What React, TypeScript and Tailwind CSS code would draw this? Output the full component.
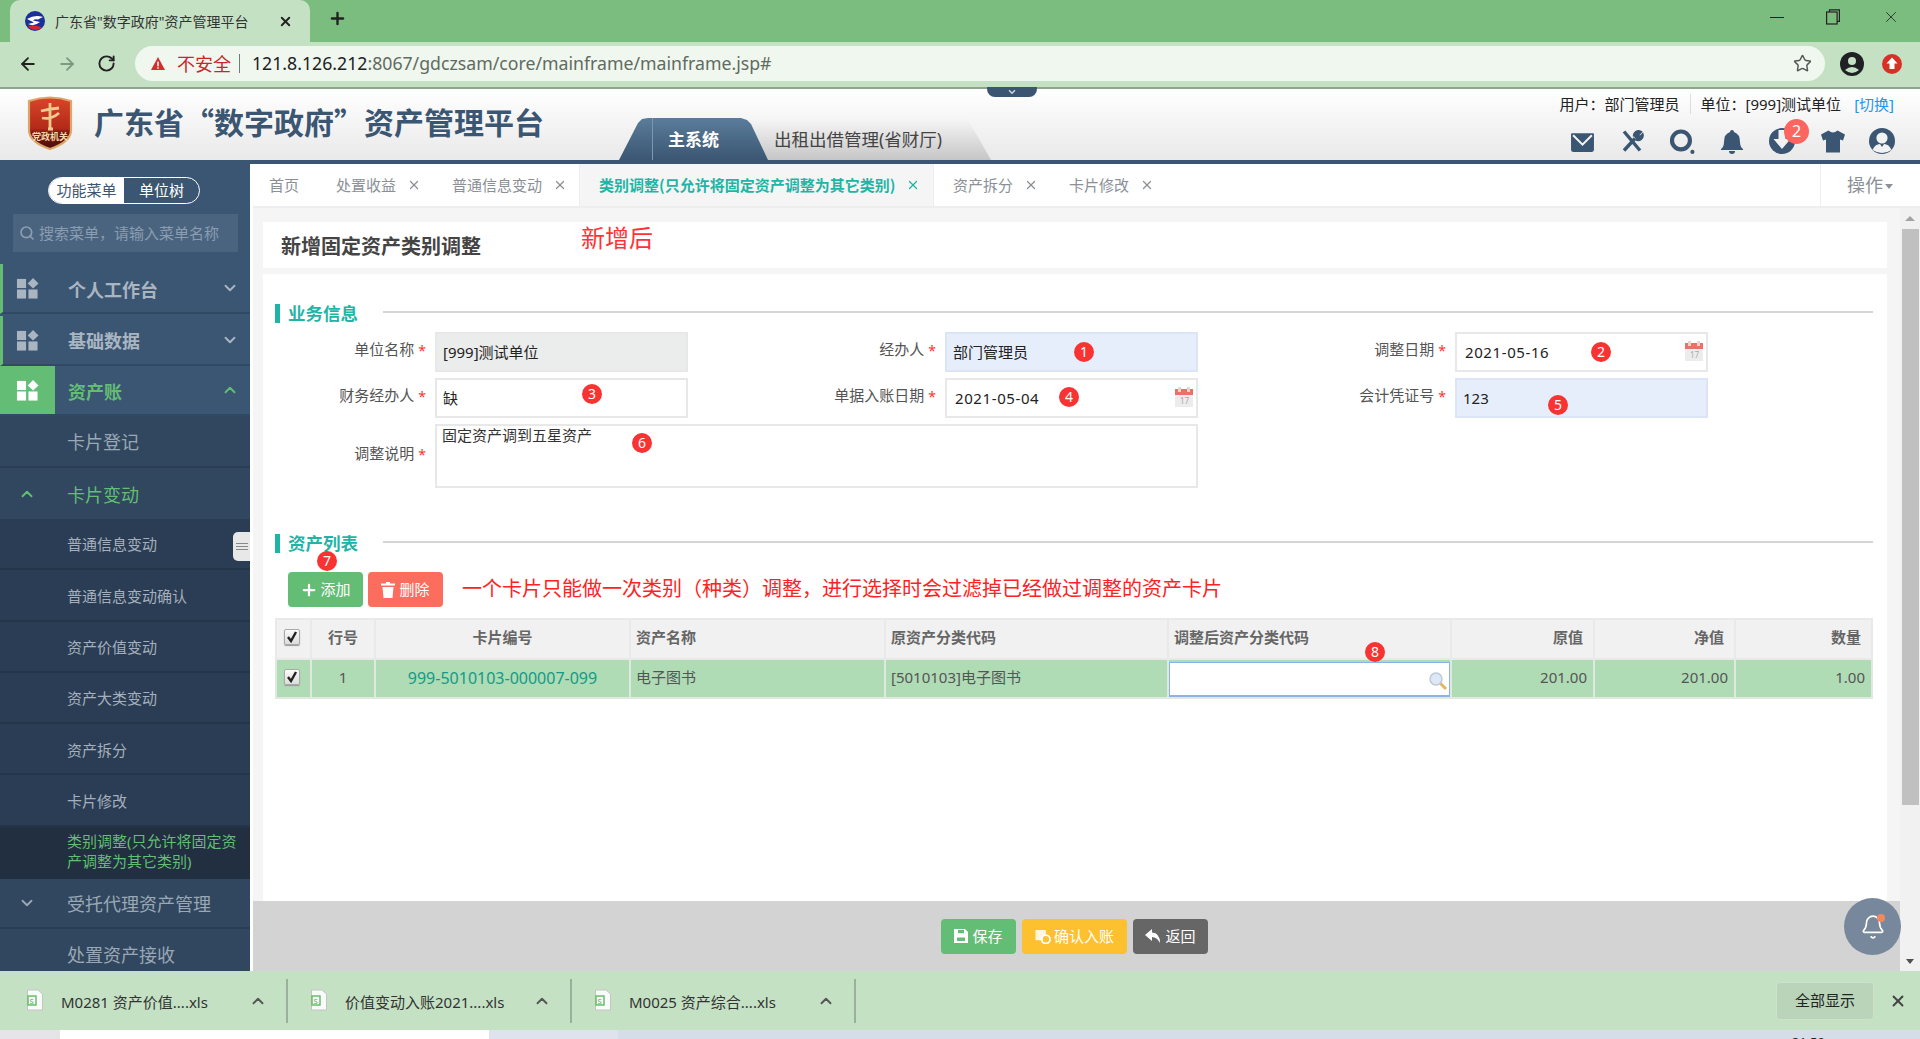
import React from "react";
import { ArrowLeft, ArrowRight, RotateCw, Star, X, Plus, ChevronUp, ChevronDown, Search, Bell } from "lucide-react";

function Badge({ n, className }: { n: number; className: string }) {
  return (
    <span className={"absolute w-[20px] h-[20px] rounded-full bg-[#f93232] text-white text-[14px] leading-[20px] text-center font-['Noto_Sans',sans-serif] " + className}>
      {n}
    </span>
  );
}

function Tile({ className }: { className: string }) {
  return (
    <svg viewBox="0 0 24 24" className={className} fill="currentColor">
      <rect x="1" y="2" width="9.5" height="9.5" />
      <rect x="1" y="13" width="9.5" height="9.5" />
      <rect x="13" y="13" width="9.5" height="9.5" />
      <path d="M17.8 1 L23.5 6.7 L17.8 12 L12.2 6.7 Z" />
    </svg>
  );
}

function BrowserBar() {
  return (
    <>
      <div className="h-[42px] bg-[#7bbd7e] flex items-end pl-[10px] relative shrink-0">
        <div className="w-[300px] h-[42px] bg-[#c4e1c4] rounded-t-[10px] flex items-center pl-[15px] text-[14px] text-[#333]">
          <svg viewBox="0 0 20 20" className="w-[20px] h-[20px] shrink-0">
            <circle cx="10" cy="10" r="10" fill="#1a2f9a" />
            <path d="M3 15 A9.5 9.5 0 0 0 17 16.5 Q11 13.5 3 15Z" fill="#d8242a" />
            <path d="M2 8 Q10 3 18 6 L13 8.5 Q10 7.5 8 9.5 L15 11 Q9 16 3 13 L9 11.5Z" fill="#fff" />
          </svg>
          <span className="ml-[10px] w-[216px] whitespace-nowrap">广东省"数字政府"资产管理平台</span>
          <X className="w-[15px] h-[15px] ml-[7px] text-[#222]" strokeWidth={3} />
        </div>
        <Plus className="w-[19px] h-[19px] ml-[18px] mb-[14px] text-[#222]" strokeWidth={3} />
        <div className="ml-auto flex items-center h-[42px] mr-[20px] mb-[4px] gap-[42px] text-[#222]">
          <span className="w-[14px] h-px bg-[#222]" />
          <svg viewBox="0 0 14 16" className="w-[14px] h-[16px]" fill="none" stroke="#222" strokeWidth="1.2">
            <rect x="0.6" y="3" width="10.5" height="12" />
            <path d="M3.5 3V0.8H13.4V12.4H11" />
          </svg>
          <X className="w-[18px] h-[18px]" strokeWidth={1.1} />
        </div>
      </div>
      <div className="h-[47px] bg-[#c4e1c4] border-b-2 border-[#8fa38f] flex items-center shrink-0 pb-[2px]">
        <ArrowLeft className="w-[20px] h-[20px] ml-[18px] text-[#222]" strokeWidth={2.2} />
        <ArrowRight className="w-[20px] h-[20px] ml-[19px] text-[#7f9880]" strokeWidth={2.2} />
        <RotateCw className="w-[19px] h-[19px] ml-[20px] text-[#222]" strokeWidth={2.4} />
        <div className="ml-[19px] w-[1690px] h-[35px] rounded-full bg-[#eff7ef] flex items-center pl-[15px] text-[18px] leading-none">
          <svg viewBox="0 0 16 16" className="w-[16px] h-[15px]">
            <path d="M8 1 L15.5 15 H0.5 Z" fill="#d32f2f" />
            <rect x="7.2" y="6" width="1.6" height="5" fill="#fff" />
            <rect x="7.2" y="12" width="1.6" height="1.6" fill="#fff" />
          </svg>
          <span className="ml-[11px] text-[#c62828]">不安全</span>
          <span className="ml-[8px] w-px h-[19px] bg-[#777]" />
          <span className="ml-[12px] text-[17.7px] text-[#222] whitespace-nowrap">121.8.126.212<span className="text-[#5f6b60]">:8067/gdczsam/core/mainframe/mainframe.jsp#</span></span>
          <Star className="ml-auto mr-[13px] w-[19px] h-[19px] text-[#555]" strokeWidth={1.8} />
        </div>
        <svg viewBox="0 0 24 24" className="ml-[15px] w-[24px] h-[24px]">
          <circle cx="12" cy="12" r="12" fill="#202124" />
          <circle cx="12" cy="9" r="4" fill="#c4e1c4" />
          <path d="M5 18 Q12 12 19 18 Q12 24 5 18Z" fill="#c4e1c4" />
        </svg>
        <svg viewBox="0 0 20 20" className="ml-[18px] w-[20px] h-[20px]">
          <circle cx="10" cy="10" r="10" fill="#d93025" />
          <path d="M10 3.5 L15.5 9.5 H12.5 V15 H7.5 V9.5 H4.5 Z" fill="#fff" />
        </svg>
      </div>
    </>
  );
}

function HeaderIcons() {
  return (
    <div className="flex items-center mr-[25px] relative text-[#3b5672]">
      <svg viewBox="0 0 24 24" className="w-[25px] h-[25px]" fill="currentColor">
        <path d="M2 4 H22 Q23 4 23 5 V20 Q23 22 21 22 H3 Q1 22 1 20 V5 Q1 4 2 4Z" />
        <path d="M3 6 L12 15 L21 6" fill="none" stroke="#f4f4f4" strokeWidth="2" />
      </svg>
      <svg viewBox="0 0 24 24" className="w-[24px] h-[25px] ml-[25px]" fill="none" stroke="currentColor" strokeWidth="3.4">
        <path d="M4 2 L20 21" />
        <path d="M4 21 L15 9" />
        <path d="M14 7 A4.5 4.5 0 0 1 21 2.5 L18 5.5 L20 7.6 L22.6 5 A4.5 4.5 0 0 1 16 10" strokeWidth="2.2" fill="currentColor" />
      </svg>
      <svg viewBox="0 0 24 24" className="w-[26px] h-[25px] ml-[25px]" fill="none" stroke="currentColor">
        <circle cx="11" cy="11" r="8.6" strokeWidth="4" />
        <circle cx="22" cy="22" r="2" fill="currentColor" stroke="none" />
      </svg>
      <svg viewBox="0 0 24 24" className="w-[24px] h-[26px] ml-[25px]" fill="currentColor">
        <path d="M12 1 Q14 1 14 3 Q20 5 20 13 Q20 18 23 20 V21 H1 V20 Q4 18 4 13 Q4 5 10 3 Q10 1 12 1Z" />
        <path d="M9 22 H15 Q15 25 12 25 Q9 25 9 22Z" />
      </svg>
      <svg viewBox="0 0 26 26" className="w-[26px] h-[26px] ml-[25px]" fill="currentColor">
        <circle cx="13" cy="13" r="13" />
        <path d="M9.5 2 H16.5 V11 H21.5 L13 21 L4.5 11 H9.5Z" fill="#f2f2f2" />
      </svg>
      <svg viewBox="0 0 26 24" className="w-[26px] h-[25px] ml-[25px]" fill="currentColor">
        <path d="M8.5 1 Q13 5 17.5 1 L25 5 L23 11 L20 10 V23 H6 V10 L3 11 L1 5Z" />
      </svg>
      <svg viewBox="0 0 26 26" className="w-[26px] h-[26px] ml-[23px]" fill="currentColor">
        <circle cx="13" cy="13" r="13" />
        <circle cx="13" cy="10" r="5.6" fill="#f2f2f2" />
        <path d="M3.5 22 Q6 16 11 16 L13 19 L15 16 Q20 16 22.5 22 Q13 28 3.5 22Z" fill="#f2f2f2" />
      </svg>
      <span className="absolute left-[214px] -top-[9px] w-[25px] h-[25px] rounded-full bg-[#fd6560] text-white text-[16px] leading-[25px] text-center font-['Noto_Sans',sans-serif]">2</span>
    </div>
  );
}

function AppHeader() {
  return (
    <div className="h-[75px] border-b-4 border-[#3b5672] bg-gradient-to-b from-white to-[#e9e9e9] flex shrink-0 relative">
      <svg viewBox="0 0 46 54" className="w-[46px] h-[54px] ml-[27px] mt-[7px] shrink-0">
        <defs>
          <linearGradient id="sh" x1="0" y1="0" x2="0" y2="1">
            <stop offset="0" stopColor="#d8452a" />
            <stop offset="0.6" stopColor="#b32a18" />
            <stop offset="0.68" stopColor="#7a1a10" />
            <stop offset="1" stopColor="#4a0d08" />
          </linearGradient>
        </defs>
        <path d="M2 5 Q23 -2 44 5 V34 Q44 46 23 53 Q2 46 2 34Z" fill="url(#sh)" stroke="#dca66a" strokeWidth="2.2" />
        <path d="M23 7 V33 M21 33 H26 M14 15 Q22 13 32 12 M15 22 Q24 24 32 17" stroke="#f3c98f" strokeWidth="2.8" fill="none" />
        <text x="23" y="44" textAnchor="middle" fontSize="9" fontWeight="700" fill="#f5d7a8" fontFamily="'Noto Sans CJK SC',sans-serif">党政机关</text>
      </svg>
      <h1 className="ml-[21px] mt-[14px] h-[36px] text-[30px] leading-[36px] font-bold text-[#3b5672] whitespace-nowrap font-['Noto_Sans_CJK_SC',sans-serif]">广东省“数字政府”资产管理平台</h1>
      <div className="ml-[75px] self-end flex relative h-[42px] w-[373px]">
        <div className="relative z-10 w-[149px] h-[42px] bg-gradient-to-b from-[#5b7d9b] to-[#3b5672] [clip-path:polygon(0_100%,19px_5px,23px_1px,29px_0,122px_0,128px_2px,132px_6px,100%_100%)] flex items-center justify-center text-[17px] font-bold text-white font-['Noto_Sans_CJK_SC',sans-serif]">
          <span className="absolute left-[33px] top-0 h-full w-px bg-[#7d97ae]" />
          主系统
        </div>
        <div className="-ml-[24px] w-[247px] h-[41px] self-end bg-gradient-to-b from-[#f6f6f6] to-[#c6c6c6] [clip-path:polygon(0_0,222px_0,226px_4px,100%_100%,21px_100%)] pl-[30px] flex items-center text-[17.5px] text-[#444] whitespace-nowrap">
          出租出借管理(省财厅)
        </div>
        <div className="absolute left-[368px] -top-[31px] w-[50px] h-[10px] bg-[#3b5672] rounded-b-[8px] flex items-center justify-center">
          <ChevronDown className="w-[10px] h-[10px] text-[#c8d2dc]" strokeWidth={4} />
        </div>
      </div>
      <div className="ml-auto flex flex-col items-end pt-[5px]">
        <div className="flex items-center text-[15px] leading-[20px] text-[#222] mr-[26px] whitespace-nowrap">
          <span>用户：部门管理员</span>
          <span className="mx-[10px] w-px h-[20px] bg-[#ddd]" />
          <span>单位：[999]测试单位</span>
          <span className="ml-[13px] text-[#2196f3]">[切换]</span>
        </div>
        <div className="mt-[14px]">
          <HeaderIcons />
        </div>
      </div>
    </div>
  );
}

function Sidebar() {
  const sub = ["普通信息变动", "普通信息变动确认", "资产价值变动", "资产大类变动", "资产拆分", "卡片修改"];
  return (
    <aside className="w-[250px] shrink-0 bg-[#3b5672] overflow-hidden relative">
      <div className="h-[50px] pl-[48px] pt-[13px]">
        <div className="w-[152px] h-[27px] rounded-full border border-white flex text-[15px] overflow-hidden">
          <span className="w-[75px] bg-white text-[#3b5672] text-center leading-[25px]">功能菜单</span>
          <span className="flex-1 text-white text-center leading-[25px]">单位树</span>
        </div>
      </div>
      <div className="ml-[13px] w-[225px] h-[38px] bg-[#4a6480] flex items-center pl-[6px] text-[15px] text-[#8b9db0]">
        <Search className="w-[16px] h-[16px] mr-[4px]" strokeWidth={2.5} />
        搜索菜单，请输入菜单名称
      </div>
      <div className="mt-[12px] border-l-[3px] border-[#63bd75] h-[50px] flex items-center border-b-2 border-b-[#304a63] text-[#a9b5c1]">
        <Tile className="ml-[13px] w-[23px] h-[23px] text-[#a9b5c1]" />
        <span className="ml-[29px] mt-[2px] text-[18px] font-bold font-['Noto_Sans_CJK_SC',sans-serif]">个人工作台</span>
        <ChevronDown className="ml-auto mr-[11px] w-[18px] h-[18px]" strokeWidth={2.5} />
      </div>
      <div className="mt-[2px] border-l-[3px] border-[#63bd75] h-[50px] flex items-center border-b-2 border-b-[#304a63] text-[#a9b5c1]">
        <Tile className="ml-[13px] w-[23px] h-[23px] text-[#a9b5c1]" />
        <span className="ml-[29px] text-[18px] font-bold font-['Noto_Sans_CJK_SC',sans-serif]">基础数据</span>
        <ChevronDown className="ml-auto mr-[11px] w-[18px] h-[18px]" strokeWidth={2.5} />
      </div>
      <div className="h-[50px] flex items-center border-b-2 border-b-[#304a63] text-[#63bd75]">
        <div className="w-[55px] h-[48px] bg-[#63bd75] flex items-center justify-center">
          <Tile className="w-[23px] h-[23px] text-white" />
        </div>
        <span className="ml-[13px] mt-[2px] text-[18px] font-bold font-['Noto_Sans_CJK_SC',sans-serif]">资产账</span>
        <ChevronUp className="ml-auto mr-[11px] w-[18px] h-[18px]" strokeWidth={2.5} />
      </div>
      <div className="h-[52px] bg-[#30475f] border-b-2 border-[#2a3e53] flex items-center pl-[67px] pt-[3px] text-[18px] text-[#9aa7b4]">卡片登记</div>
      <div className="h-[51px] bg-[#30475f] flex items-center text-[18px] text-[#63bd75]">
        <ChevronUp className="ml-[18px] w-[18px] h-[18px]" strokeWidth={2.5} />
        <span className="ml-[31px] mt-[3px]">卡片变动</span>
      </div>
      <div className="bg-[#2a3d54] relative">
        {sub.map((s) => (
          <div key={s} className="h-[51.3px] border-b-2 border-[#24354a] flex items-center pl-[67px] pt-[2px] text-[15px] text-[#a5b0bc]">{s}</div>
        ))}
        <div className="h-[52px] bg-[#212f40] pl-[67px] pr-[10px] pb-[4px] flex items-center text-[15px] leading-[20px] text-[#63bd75]">类别调整(只允许将固定资产调整为其它类别)</div>
        <div className="absolute right-0 top-[13px] w-[17px] h-[29px] rounded-l-[5px] bg-[#e8e8e8] flex flex-col items-center justify-center gap-[2px]">
          <span className="w-[12px] h-px bg-[#888]" />
          <span className="w-[12px] h-px bg-[#888]" />
          <span className="w-[12px] h-px bg-[#888]" />
        </div>
      </div>
      <div className="h-[50px] bg-[#30475f] border-b-2 border-[#2a3e53] flex items-center text-[18px] text-[#9aa7b4]">
        <ChevronDown className="ml-[18px] w-[18px] h-[18px]" strokeWidth={2.5} />
        <span className="ml-[31px] mt-[3px]">受托代理资产管理</span>
      </div>
      <div className="h-[50px] bg-[#30475f] flex items-center pl-[67px] pt-[3px] text-[18px] text-[#9aa7b4]">处置资产接收</div>
    </aside>
  );
}

function TabBar() {
  const Close = ({ c }: { c?: string }) => <X className={"w-[14px] h-[14px] " + (c ?? "text-[#8a8f94]")} strokeWidth={2.2} />;
  return (
    <div className="h-[44px] border-b-2 border-[#eee] bg-white flex items-center text-[15px] text-[#8a9096] shrink-0 whitespace-nowrap">
      <span className="ml-[16px]">首页</span>
      <span className="ml-[37px]">处置收益</span>
      <span className="ml-[11px]"><Close /></span>
      <span className="ml-[31px]">普通信息变动</span>
      <span className="ml-[11px]"><Close /></span>
      <div className="ml-[12px] w-[355px] h-[42px] bg-[#f5f5f5] border-l border-r border-[#eee] flex items-center pl-[19px] text-[#1fb5a6] font-bold font-['Noto_Sans_CJK_SC',sans-serif]">
        <span className="text-[15px]">类别调整(只允许将固定资产调整为其它类别)</span>
        <span className="ml-auto mr-[13px]"><Close c="text-[#1fb5a6]" /></span>
      </div>
      <span className="ml-[19px]">资产拆分</span>
      <span className="ml-[11px]"><Close /></span>
      <span className="ml-[31px]">卡片修改</span>
      <span className="ml-[11px]"><Close /></span>
      <div className="ml-auto w-[100px] h-[42px] border-l border-[#eee] flex items-center pl-[26px] text-[18px] text-[#8a9096]">
        操作
        <span className="ml-[2px] mt-[3px] border-x-[4.5px] border-x-transparent border-t-[5px] border-t-[#8a9096]" />
      </div>
    </div>
  );
}

function Calendar() {
  return (
    <svg viewBox="0 0 18 20" className="absolute right-[3px] top-[7px] w-[18px] h-[20px]">
      <rect x="0" y="2" width="18" height="18" fill="#ececec" />
      <rect x="0" y="2" width="18" height="6" fill="#e57368" />
      <rect x="3" y="0" width="3" height="5" fill="#f3d0cc" />
      <rect x="12" y="0" width="3" height="5" fill="#f3d0cc" />
      <text x="5" y="17" fontSize="8" fill="#aaa" fontFamily="'Noto Sans',sans-serif">17</text>
    </svg>
  );
}

function Label({ children }: { children: React.ReactNode }) {
  return (
    <div className="pr-[9px] flex items-center justify-end text-[15px] text-[#555] pb-[5px]">
      {children}
      <span className="ml-[4px] text-[#f33] text-[14px] mt-[2px]">*</span>
    </div>
  );
}

function Input({ children, className }: { children?: React.ReactNode; className?: string }) {
  return (
    <div className={"relative h-[40px] border-2 flex items-center pl-[6px] text-[15px] text-[#222] " + (className ?? "border-[#e8e8e8] bg-white")}>
      {children}
    </div>
  );
}

function SectionTitle({ children }: { children: React.ReactNode }) {
  return (
    <div className="flex items-center h-[19px] pl-[12px] pr-[14px]">
      <span className="w-[5px] h-[19px] bg-[#1fb5a6]" />
      <span className="ml-[8px] text-[17.5px] font-bold text-[#1fb5a6] font-['Noto_Sans_CJK_SC',sans-serif] whitespace-nowrap">{children}</span>
      <span className="ml-[25px] mb-[3px] flex-1 h-[2px] bg-[#d5d5d5]" />
    </div>
  );
}

function Check() {
  return (
    <span className="inline-flex w-[16px] h-[16px] rounded-[2px] border border-[#aaa] bg-gradient-to-b from-[#fafafa] to-[#ddd] items-center justify-center shadow-[0_1px_1px_#999]">
      <svg viewBox="0 0 12 12" className="w-[12px] h-[12px]">
        <path d="M2 6 L5 10 L10 1" fill="none" stroke="#222" strokeWidth="2.4" />
      </svg>
    </span>
  );
}

function AssetTable() {
  const th = "border-2 border-[#e9e9e9] text-[15px] font-bold text-[#666] font-['Noto_Sans_CJK_SC',sans-serif] px-[5px] pb-[3px] ";
  const td = "border-2 border-[#dfe9df] text-[15px] px-[5px] pb-[2px] ";
  return (
    <table className="ml-[12px] w-[1596px] table-fixed border-collapse">
      <colgroup>
        <col className="w-[35px]" />
        <col className="w-[64px]" />
        <col className="w-[255px]" />
        <col className="w-[255px]" />
        <col className="w-[283px]" />
        <col className="w-[283px]" />
        <col className="w-[143px]" />
        <col className="w-[141px]" />
        <col className="w-[137px]" />
      </colgroup>
      <thead>
        <tr className="h-[40px] bg-[#f1f1f1]">
          <th className={th + "text-left pl-[7px]"}><Check /></th>
          <th className={th + "text-center"}>行号</th>
          <th className={th + "text-center"}>卡片编号</th>
          <th className={th + "text-left"}>资产名称</th>
          <th className={th + "text-left"}>原资产分类代码</th>
          <th className={th + "text-left relative"}>
            调整后资产分类代码
            <Badge n={8} className="left-[196px] top-[22px] font-normal" />
          </th>
          <th className={th + "text-right pr-[10px]"}>原值</th>
          <th className={th + "text-right pr-[10px]"}>净值</th>
          <th className={th + "text-right pr-[10px]"}>数量</th>
        </tr>
      </thead>
      <tbody>
        <tr className="h-[38px] bg-[#afdbb5] text-[#555]">
          <td className={td + "text-left pl-[7px]"}><Check /></td>
          <td className={td + "text-center"}>1</td>
          <td className={td + "text-center"}><span className="text-[16px] text-[#149a86]">999-5010103-000007-099</span></td>
          <td className={td}>电子图书</td>
          <td className={td}>[5010103]电子图书</td>
          <td className="border-2 border-[#dfe9df] p-0 pt-[1px]">
            <div className="relative h-[35px] mt-px bg-white border border-[#8ab4e8] border-b-2">
              <svg viewBox="0 0 20 20" className="absolute right-[1px] top-[8px] w-[20px] h-[20px]">
                <circle cx="8" cy="8" r="6" fill="#dce8f5" stroke="#bcc9d6" strokeWidth="1.5" />
                <path d="M12.5 12.5 L18 18" stroke="#e8b26a" strokeWidth="3" />
              </svg>
            </div>
          </td>
          <td className={td + "text-right pr-[6px]"}>201.00</td>
          <td className={td + "text-right pr-[6px]"}>201.00</td>
          <td className={td + "text-right pr-[6px]"}>1.00</td>
        </tr>
      </tbody>
    </table>
  );
}

function Content() {
  return (
    <div className="flex-1 min-h-0 bg-[#f5f5f5] pl-[10px] pr-[13px] pt-[14px] flex flex-col">
      <div className="h-[46px] bg-white flex items-center pl-[18px] pt-[2px] shrink-0">
        <h2 className="w-[300px] text-[20px] font-bold text-[#444] font-['Noto_Sans_CJK_SC',sans-serif]">新增固定资产类别调整</h2>
        <span className="-mt-[16px] text-[24px] text-[#f33]">新增后</span>
      </div>
      <div className="mt-[6px] flex-1 bg-white pt-[30px]">
        <SectionTitle>业务信息</SectionTitle>
        <div className="mt-[9px] grid grid-cols-[172px_253px_257px_253px_257px_253px] gap-y-[6px] auto-rows-min">
          <Label>单位名称</Label>
          <Input className="border-[#e8e8e8] bg-[#ebedec]">[999]测试单位</Input>
          <Label>经办人</Label>
          <Input className="border-[#dbe5f5] bg-[#e6eefb]">部门管理员<Badge n={1} className="left-[127px] top-[8px]" /></Input>
          <Label>调整日期</Label>
          <Input><span className="pl-[2px] font-['Noto_Sans',sans-serif] tracking-[0.6px]">2021-05-16</span><Badge n={2} className="left-[134px] top-[8px]" /><Calendar /></Input>
          <Label>财务经办人</Label>
          <Input>缺<Badge n={3} className="left-[145px] top-[4px]" /></Input>
          <Label>单据入账日期</Label>
          <Input><span className="pl-[2px] font-['Noto_Sans',sans-serif] tracking-[0.6px]">2021-05-04</span><Badge n={4} className="left-[112px] top-[7px]" /><Calendar /></Input>
          <Label>会计凭证号</Label>
          <Input className="border-[#dbe5f5] bg-[#e6eefb]"><span className="font-['Noto_Sans',sans-serif]">123</span><Badge n={5} className="left-[91px] top-[15px]" /></Input>
          <Label>调整说明</Label>
          <div className="col-span-3 relative h-[64px] border-2 border-[#e8e8e8] px-[5px] text-[15px] leading-[18px] text-[#333]">
            固定资产调到五星资产
            <Badge n={6} className="left-[195px] top-[7px]" />
          </div>
        </div>
        <div className="mt-[46px]">
          <SectionTitle>资产列表</SectionTitle>
        </div>
        <div className="mt-[19px] ml-[25px] flex items-center">
          <div className="relative w-[75px] h-[35px] rounded-[4px] bg-[#63bd75] text-white text-[15px] flex items-center justify-center">
            <Plus className="w-[18px] h-[18px] mr-[2px]" strokeWidth={3} />
            添加
            <Badge n={7} className="left-[29px] -top-[21px]" />
          </div>
          <div className="ml-[5px] w-[75px] h-[35px] rounded-[4px] bg-[#fc6d5e] text-white text-[15px] flex items-center justify-center">
            <svg viewBox="0 0 14 16" className="w-[14px] h-[16px] mr-[4px]" fill="#fff">
              <rect x="0" y="1.5" width="14" height="2" />
              <rect x="5" y="0" width="4" height="2" />
              <path d="M1.5 5 H12.5 L11.5 16 H2.5Z" />
            </svg>
            删除
          </div>
          <span className="ml-[19px] -mt-[2px] text-[20px] text-[#f22] whitespace-nowrap">一个卡片只能做一次类别（种类）调整，进行选择时会过滤掉已经做过调整的资产卡片</span>
        </div>
        <div className="mt-[11px]">
          <AssetTable />
        </div>
      </div>
    </div>
  );
}

function Footer() {
  return (
    <div className="h-[70px] bg-[#d3d3d3] shrink-0 flex items-center justify-center gap-[6px] pr-[4px] text-white text-[15px]">
      <div className="w-[75px] h-[35px] rounded-[4px] bg-[#63bd75] flex items-center justify-center">
        <svg viewBox="0 0 14 14" className="w-[14px] h-[14px] mr-[4px]" fill="#fff">
          <path d="M0 0 H11 L14 3 V14 H0Z" />
          <rect x="4" y="1" width="6" height="3.2" fill="#63bd75" />
          <rect x="3" y="8.5" width="8" height="3.5" fill="#63bd75" />
        </svg>
        保存
      </div>
      <div className="w-[105px] h-[35px] rounded-[4px] bg-[#fdc02f] flex items-center justify-center">
        <svg viewBox="0 0 16 16" className="w-[16px] h-[15px] mr-[3px]" fill="#fff">
          <path d="M0 1 H11 V7 H8 V12 H0Z" opacity="0.85" />
          <circle cx="11" cy="11" r="4.5" fill="none" stroke="#fff" strokeWidth="2" />
        </svg>
        确认入账
      </div>
      <div className="w-[75px] h-[35px] rounded-[4px] bg-[#666] flex items-center justify-center">
        <svg viewBox="0 0 16 14" className="w-[16px] h-[14px] mr-[4px]" fill="#fff">
          <path d="M7 0 V3.5 Q15 4 15 14 Q12 8 7 8 V12 L0 6Z" />
        </svg>
        返回
      </div>
    </div>
  );
}

function ScrollBar() {
  return (
    <div className="w-[20px] shrink-0 bg-[#f1f1f1] flex flex-col items-center">
      <div className="h-[21px] shrink-0 flex items-center justify-center">
        <span className="border-x-[5px] border-x-transparent border-b-[5px] border-b-[#a3a3a3]" />
      </div>
      <div className="w-[17px] h-[576px] bg-[#c0c0c0] shrink-0" />
      <div className="mt-auto h-[20px] flex items-center justify-center">
        <span className="border-x-[4.5px] border-x-transparent border-t-[5px] border-t-[#505050]" />
      </div>
    </div>
  );
}

function DownloadItem({ w, iconMl, name }: { w: string; iconMl: string; name: string }) {
  return (
    <div className={"h-[44px] border-r-2 border-[#9ab09a] flex items-center shrink-0 " + w}>
      <svg viewBox="0 0 16 22" className={"w-[16px] h-[22px] shrink-0 -mt-[2px] " + iconMl}>
        <path d="M0.5 1 H11 L15.5 5 V21 H0.5Z" fill="#fafafa" stroke="#c4c4c4" />
        <rect x="1" y="7" width="8" height="9" fill="none" stroke="#5dbb63" strokeWidth="1.4" />
        <text x="2.5" y="14.5" fontSize="7.5" fill="#4caf50" fontFamily="'Noto Sans',sans-serif">S</text>
      </svg>
      <span className="ml-[18px] mt-[4px] text-[15px] text-[#333] whitespace-nowrap">{name}</span>
      <ChevronUp className="ml-auto mr-[19px] w-[18px] h-[18px] text-[#555]" strokeWidth={2.5} />
    </div>
  );
}

function DownloadBar() {
  return (
    <div className="h-[59px] bg-[#c4e1c4] flex items-center shrink-0">
      <DownloadItem w="w-[288px]" iconMl="ml-[27px]" name="M0281 资产价值....xls" />
      <DownloadItem w="w-[284px]" iconMl="ml-[23px]" name="价值变动入账2021....xls" />
      <DownloadItem w="w-[284px]" iconMl="ml-[23px]" name="M0025 资产综合....xls" />
      <div className="ml-auto w-[98px] h-[38px] rounded-[4px] border border-[#cfe0cf] bg-[#b9d4b9] flex items-center justify-center text-[15px] text-[#222]">全部显示</div>
      <X className="ml-[15px] mr-[13px] w-[18px] h-[18px] text-[#444]" strokeWidth={2.5} />
    </div>
  );
}

export default function App() {
  return (
    <div className="w-[1920px] h-[1039px] overflow-hidden flex flex-col bg-white font-['Noto_Sans','Noto_Sans_CJK_SC',sans-serif] relative">
      <BrowserBar />
      <AppHeader />
      <div className="h-[807px] flex shrink-0 relative">
        <Sidebar />
        <div className="flex-1 min-w-0 pl-[3px] bg-white flex flex-col">
          <TabBar />
          <div className="flex-1 min-h-0 flex">
            <div className="flex-1 min-w-0 flex flex-col">
              <Content />
              <Footer />
            </div>
            <ScrollBar />
          </div>
        </div>
        <div className="absolute left-[1844px] top-[734px] w-[57px] h-[57px] rounded-full bg-[#77889c] flex items-center justify-center text-white">
          <Bell className="w-[26px] h-[26px]" strokeWidth={1.5} />
          <span className="absolute left-[33px] top-[16px] w-[8px] h-[8px] rounded-full bg-[#f08a5d]" />
        </div>
      </div>
      <DownloadBar />
      <div className="flex-1 flex bg-[#d4dde8] overflow-hidden">
        <div className="w-[60px] bg-[#e6e4e8]" />
        <div className="w-[429px] bg-white" />
        <div className="w-[129px] bg-[#dfe3ee]" />
        <div className="ml-auto mr-[95px] text-[13px] leading-none pt-[6px] text-[#222]">21:50</div>
      </div>
    </div>
  );
}
